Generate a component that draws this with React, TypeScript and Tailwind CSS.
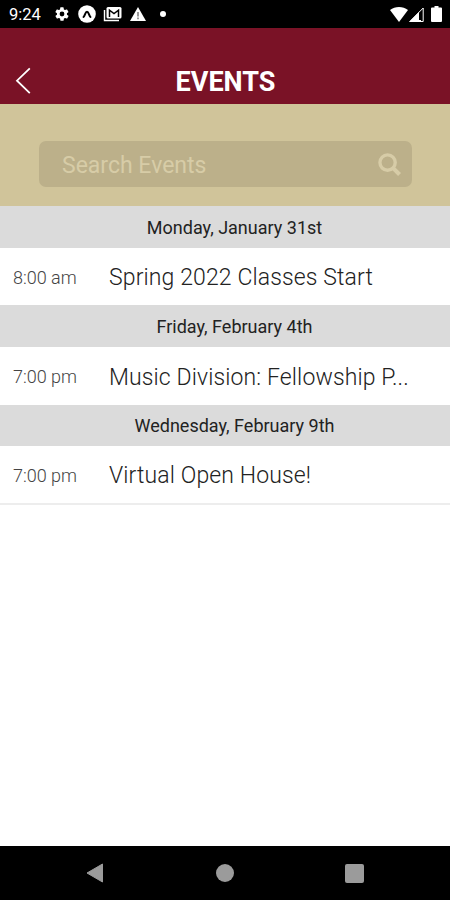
import React from "react";

type EventDay = { date: string; dateClass: string; time: string; title: string; titleClass: string };

const days: EventDay[] = [
  { date: "Monday, January 31st", dateClass: "h-[42px]", time: "8:00 am", title: "Spring 2022 Classes Start", titleClass: "h-[57px]" },
  { date: "Friday, February 4th", dateClass: "h-[42px]", time: "7:00 pm", title: "Music Division: Fellowship P...", titleClass: "h-[58px]" },
  { date: "Wednesday, February 9th", dateClass: "h-[41px]", time: "7:00 pm", title: "Virtual Open House!", titleClass: "h-[59px] border-b-2 border-[#ededed]" },
];

function StatusBar() {
  return (
    <div className="flex h-7 shrink-0 items-center bg-black text-white">
      <span className="ml-[9px] w-[45px] pt-[2px] text-[16.500px] leading-7">9:24</span>
      <svg className="h-4 w-4" viewBox="0 0 24 24" fill="currentColor">
        <path d="M19.4 13a7.5 7.5 0 0 0 0-2l2.1-1.6a.5.5 0 0 0 .1-.6l-2-3.5a.5.5 0 0 0-.6-.2l-2.5 1a7.3 7.3 0 0 0-1.7-1l-.4-2.6a.5.5 0 0 0-.5-.5h-4a.5.5 0 0 0-.5.5L9 5.100a7.300 7.300 0 0 0-1.700 1l-2.500-1a.5.5 0 0 0-.6.2l-2 3.500a.5.5 0 0 0 .1.600L4.500 11a7.500 7.500 0 0 0 0 2l-2.100 1.600a.5.5 0 0 0-.1.600l2 3.500c.1.2.4.3.6.2l2.500-1a7.300 7.300 0 0 0 1.700 1l.4 2.600c0 .3.2.5.5.5h4c.3 0 .5-.2.5-.5l.4-2.600a7.300 7.300 0 0 0 1.700-1l2.500 1c.2.1.5 0 .6-.2l2-3.500a.5.5 0 0 0-.1-.600zM12 15.600a3.600 3.600 0 1 1 0-7.200 3.600 3.600 0 0 1 0 7.200z" />
      </svg>
      <svg className="ml-2 h-[18px] w-[18px]" viewBox="0 0 18 18">
        <circle cx="9" cy="9" r="8.800" fill="currentColor" />
        <path d="M5.500 12c1.500-1 1.700-5.300 3.500-5.300s2 4.300 3.500 5.300" fill="none" stroke="#000" strokeWidth="2" strokeLinecap="round" />
      </svg>
      <svg className="ml-[7px] h-4 w-[19px]" viewBox="0 0 19 16">
        <path d="M1.500 4v10.500H16" fill="none" stroke="currentColor" strokeWidth="1.400" />
        <rect x="3.500" y="1" width="15" height="11.500" rx="1.500" fill="currentColor" />
        <path d="M6.500 11V4.200l4.500 3.400 4.500-3.400V11" fill="none" stroke="#000" strokeWidth="1.500" />
      </svg>
      <svg className="ml-2 h-[14px] w-4" viewBox="0 0 16 14">
        <path d="M8 0l8 14H0z" fill="currentColor" />
        <path d="M8 5v4.500M8 10.500v1.700" stroke="#666" strokeWidth="1.300" />
      </svg>
      <span className="ml-[14px] h-[6px] w-[6px] rounded-full bg-white" />
      <svg className="ml-auto h-[15px] w-[18px]" viewBox="0 0 18 15" fill="currentColor">
        <path d="M0 3C5-.9 13-.9 18 3L9 15z" />
      </svg>
      <svg className="ml-[1px] h-[15px] w-[15px]" viewBox="0 0 15 15">
        <path d="M.8 14.500L14.200 1v13.500z" fill="none" stroke="currentColor" strokeWidth="1" />
        <path d="M0 15L10 5v8h2v2z" fill="currentColor" />
      </svg>
      <svg className="ml-[7px] mr-[8px] h-4 w-[11px]" viewBox="0 0 11 16" fill="currentColor">
        <path d="M3.500 0h4v1.500H10q1 0 1 1V15q0 1-1 1H1q-1 0-1-1V2.500q0-1 1-1h2.500z" />
      </svg>
    </div>
  );
}

export default function App() {
  return (
    <div className="flex h-[900px] w-[450px] flex-col overflow-hidden bg-white font-[Roboto,sans-serif]">
      <StatusBar />
      <header className="grid h-[76px] shrink-0 grid-cols-[48px_1fr_48px] bg-[#7a1226] pt-[34px] text-white">
        <svg className="ml-[15px] mt-[5px] h-7 w-4" viewBox="0 0 16 28" fill="none" stroke="currentColor" strokeWidth="1.800">
          <path d="M14.800 1.300L2 13.700l12.800 12.400" />
        </svg>
        <h1 className="pl-[1px] text-center text-[27px] leading-[40px] font-bold">EVENTS</h1>
      </header>
      <div className="h-[102px] shrink-0 bg-[#d0c49a] pt-[37px] pr-[38px] pl-[39px]">
        <div className="flex h-[46px] items-center justify-between rounded-[7px] bg-[#bcb08a] pr-[11px] pl-[23px] text-[#d7cca7]">
          <span className="pt-[3px] text-[23px] leading-none">Search Events</span>
          <svg className="h-[23px] w-[23px]" viewBox="0 0 24 24" fill="none" stroke="currentColor">
            <circle cx="10" cy="10" r="8" strokeWidth="3.500" />
            <path d="M15.800 15.800l6.700 6.600" strokeWidth="4.300" />
          </svg>
        </div>
      </div>
      <main className="flex-1">
        {days.map((day) => (
          <section key={day.date}>
            <h2 className={`flex items-center justify-center bg-[#dbdbdb] pl-[19px] text-[18px] text-[#222] ${day.dateClass}`}>{day.date}</h2>
            <div className={`flex items-center pt-[1px] pl-[13px] ${day.titleClass}`}>
              <time className="w-[96px] text-[18px] font-light text-[#444]">{day.time}</time>
              <span className="whitespace-nowrap pt-[3px] text-[23px] font-light tracking-[0.12px] text-[#222]">{day.title}</span>
            </div>
          </section>
        ))}
      </main>
      <nav className="flex h-[54px] shrink-0 items-center bg-black text-[#9b9b9b]">
        <svg className="ml-[86px] h-5 w-[18px]" viewBox="0 0 18 20" fill="currentColor" stroke="currentColor" strokeLinejoin="round">
          <path d="M16.500 1v18L1 10z" />
        </svg>
        <span className="ml-[112px] h-[18px] w-[18px] rounded-full bg-current" />
        <span className="ml-[111px] h-[19px] w-[19px] rounded-[2px] bg-current" />
      </nav>
    </div>
  );
}
